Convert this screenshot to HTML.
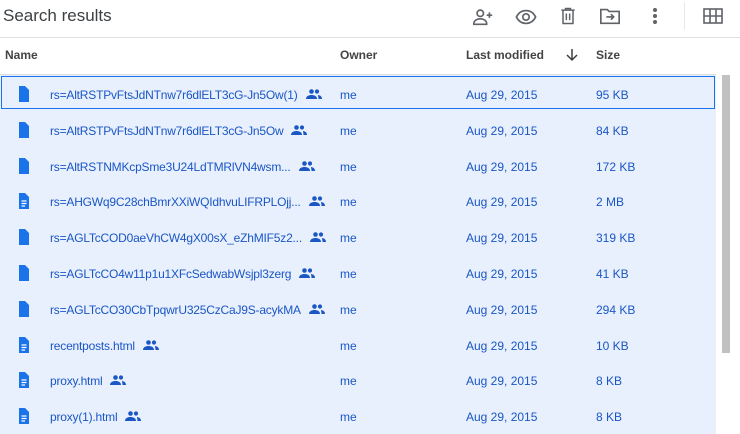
<!DOCTYPE html>
<html><head><meta charset="utf-8"><style>
body{margin:0;width:740px;height:434px;overflow:hidden;background:#fff;font-family:"Liberation Sans",sans-serif;position:relative}
.t{position:absolute;left:3px;top:6px;font-size:17px;color:#3c4043}
.hl{position:absolute;left:0;top:37px;width:740px;height:1px;background:#e0e0e0}
.h{position:absolute;top:48px;font-size:12px;color:#444;font-weight:bold}
.hl2{position:absolute;left:0;top:74px;width:716px;height:1px;background:#dadce0}
.sel{position:absolute;left:0;top:75px;width:716px;height:359px;background:#e8f0fe}
.row{position:absolute;left:0;width:716px;height:36px;font-size:12px;color:#1a56c4}
.row span{position:absolute;top:12px;white-space:nowrap}
.n{letter-spacing:-0.2px}
.foc{position:absolute;left:1px;top:76px;width:712px;height:31px;border:1px solid #1a73e8}
.sb{position:absolute;left:722px;top:75px;width:8px;height:278px;background:#c1c1c1}
svg.i{position:absolute}
</style></head><body>
<div class="t">Search results</div>
<svg class="i" style="left:472px;top:6px" width="22" height="22" viewBox="0 0 24 24" fill="none" stroke="#5f6368" stroke-width="1.8"><circle cx="9" cy="8" r="3.5"/><path d="M2 19c0-3.5 4-5 7-5s7 1.5 7 5v1H2z"/><path d="M19 7v6M16 10h6"/></svg>
<svg class="i" style="left:514px;top:6px" width="24" height="22" viewBox="0 0 24 24" fill="none" stroke="#5f6368" stroke-width="1.8"><path d="M1.5 12C4 7 8 5 12 5s8 2 10.5 7C20 17 16 19 12 19s-8-2-10.5-7z"/><circle cx="12" cy="12" r="3.5"/></svg>
<svg class="i" style="left:558px;top:5px" width="20" height="22" viewBox="0 0 24 24" fill="none" stroke="#5f6368" stroke-width="1.8"><path d="M4 5h16M9 5V3h6v2M6 5v16h12V5M10 9v8M14 9v8"/></svg>
<svg class="i" style="left:599px;top:5px" width="22" height="22" viewBox="0 0 24 24" fill="none" stroke="#5f6368" stroke-width="1.8"><path d="M2 5h7l2 2h11v13H2z"/><path d="M8 13h8M13 10l3 3-3 3"/></svg>
<svg class="i" style="left:650px;top:6px" width="10" height="20" viewBox="0 0 10 20" fill="#5f6368"><circle cx="5" cy="4" r="2"/><circle cx="5" cy="10" r="2"/><circle cx="5" cy="16" r="2"/></svg>
<div style="position:absolute;left:684px;top:2px;width:1px;height:28px;background:#e8e8e8"></div>
<svg class="i" style="left:703px;top:8px" width="20" height="16" viewBox="0 0 20 16" fill="none" stroke="#5f6368" stroke-width="1.6"><rect x="1" y="1" width="18" height="14"/><path d="M7 1v14M13 1v14M1 8h18"/></svg>
<div class="hl"></div>
<div class="h" style="left:5px">Name</div>
<div class="h" style="left:340px">Owner</div>
<div class="h" style="left:466px">Last modified</div>
<svg class="i" style="left:565px;top:48px" width="14" height="14" viewBox="0 0 14 14" fill="none" stroke="#3c4043" stroke-width="1.5"><path d="M7 1v11M2 7l5 5 5-5"/></svg>
<div class="h" style="left:596px">Size</div>
<div class="hl2"></div>
<div class="sel"></div>
<div class="foc"></div>
<div class="sb"></div>
<div id="rows"></div>
<script>
var d=[["rs=AltRSTPvFtsJdNTnw7r6dlELT3cG-Jn5Ow(1)","95 KB",0],["rs=AltRSTPvFtsJdNTnw7r6dlELT3cG-Jn5Ow","84 KB",0],["rs=AltRSTNMKcpSme3U24LdTMRlVN4wsm...","172 KB",0],["rs=AHGWq9C28chBmrXXiWQIdhvuLIFRPLOjj...","2 MB",1],["rs=AGLTcCOD0aeVhCW4gX00sX_eZhMIF5z2...","319 KB",0],["rs=AGLTcCO4w11p1u1XFcSedwabWsjpl3zerg","41 KB",0],["rs=AGLTcCO30CbTpqwrU325CzCaJ9S-acykMA","294 KB",0],["recentposts.html","10 KB",1],["proxy.html","8 KB",1],["proxy(1).html","8 KB",1]];
var h="";
d.forEach(function(r,i){var top=76+i*35.8;
var ic=r[2]?'<path d="M2 0h6l4 4v12H2z" fill="#1a73e8"/><path d="M4.5 8h5M4.5 10.5h5M4.5 13h3.5" stroke="#fff" stroke-width="1.2"/>':'<path d="M2 0h6l4 4v12H2z" fill="#1a73e8"/>';
h+='<div class="row" style="top:'+top+'px"><svg class="i" style="left:17px;top:10px" width="14" height="16" viewBox="0 0 14 16">'+ic+'</svg><span style="left:50px" class="n">'+r[0]+'<svg width="16" height="10" viewBox="0 0 16 10" style="margin-left:8px;vertical-align:0px" fill="#1a56c4"><circle cx="5.5" cy="2.5" r="2.3"/><circle cx="11" cy="2.5" r="2.1"/><path d="M0 10c0-3 3-4 5.5-4s5.5 1 5.5 4z"/><path d="M12 6c2 .3 4 1.2 4 4h-3.5c0-1.7-.5-3-.5-4z"/></svg></span><span style="left:340px">me</span><span style="left:466px">Aug 29, 2015</span><span style="left:596px">'+r[1]+'</span></div>';});
document.getElementById("rows").innerHTML=h;
</script>
</body></html>
